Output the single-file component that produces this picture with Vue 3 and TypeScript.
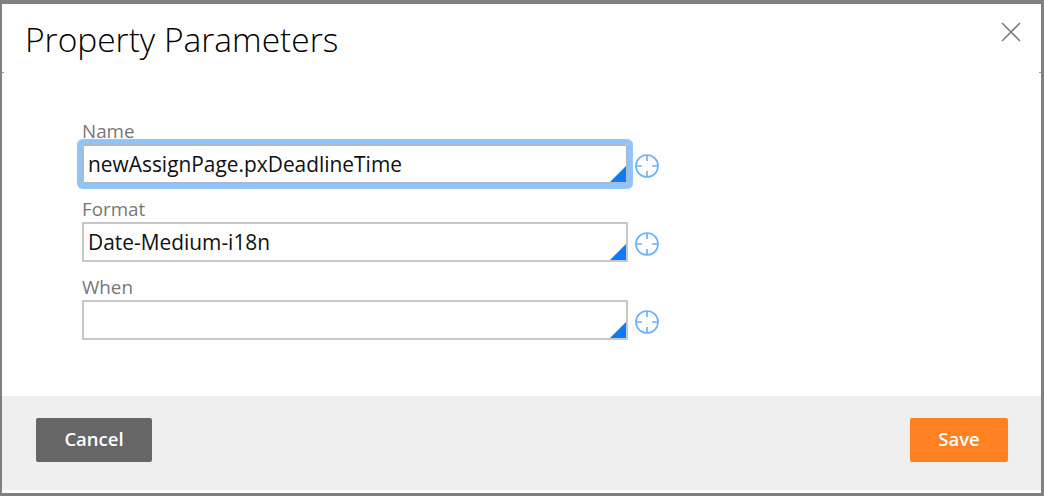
<script setup lang="ts">
interface Field {
  label: string;
  value: string;
  focused?: boolean;
}

const fields: Field[] = [
  { label: 'Name', value: 'newAssignPage.pxDeadlineTime', focused: true },
  { label: 'Format', value: 'Date-Medium-i18n' },
  { label: 'When', value: '' }
];
</script>

<template>
  <div class="page">
    <div class="modal">
      <header class="head">
        <h1>Property Parameters</h1>
        <button class="close" aria-label="Close">
          <svg width="20" height="20" viewBox="0 0 20 20">
            <path d="M1 1L19 19M19 1L1 19" stroke="#808080" stroke-width="1.6" fill="none" />
          </svg>
        </button>
      </header>
      <div class="body">
        <div v-for="field in fields" :key="field.label" class="field">
          <label>{{ field.label }}</label>
          <div class="row">
            <div class="input" :class="{ focused: field.focused }">
              <span>{{ field.value }}</span>
              <i class="corner"></i>
            </div>
            <svg class="target" width="26" height="26" viewBox="0 0 26 26">
              <circle cx="13" cy="13" r="11" stroke="#6fb1f7" stroke-width="1.7" fill="none" />
              <path d="M13 2V8M13 18V24M2 13H8M18 13H24" stroke="#6fb1f7" stroke-width="1.7" fill="none" />
            </svg>
          </div>
        </div>
      </div>
      <footer class="foot">
        <button class="btn cancel">Cancel</button>
        <button class="btn save">Save</button>
      </footer>
    </div>
  </div>
</template>

<style>
html,
body {
  margin: 0;
  background: #808080;
}
</style>

<style scoped>
.page {
  width: 1044px;
  height: 496px;
  box-sizing: border-box;
  padding: 4px 3px 3px 2px;
  font-family: 'Open Sans', 'Liberation Sans', sans-serif;
}
.modal {
  height: 100%;
  display: flex;
  flex-direction: column;
  background: #fff;
  padding-bottom: 3px;
  box-sizing: border-box;
}
.head {
  position: relative;
  height: 68px;
  display: flex;
  justify-content: space-between;
  padding: 0 20px 0 23px;
}
/* tiny ticks left by the window behind the dialog */
.head::before,
.head::after {
  content: '';
  position: absolute;
  bottom: -1px;
  width: 2px;
  height: 1px;
  background: #9a9a9a;
}
.head::before {
  left: 0;
}
.head::after {
  right: 0;
}
h1 {
  margin: 13px 0 0;
  font-size: 33.5px;
  line-height: 44px;
  font-weight: 300;
  color: #000;
}
.close {
  border: 0;
  background: none;
  padding: 0;
  height: 20px;
  margin-top: 18px;
}
.body {
  flex: 1;
  padding: 48px 0 0 80px;
}
.field {
  margin-bottom: 14px;
}
label {
  display: block;
  height: 24px;
  font-size: 18.8px;
  line-height: 22px;
  color: #777;
}
.row {
  display: flex;
  align-items: center;
  gap: 6px;
}
.input {
  position: relative;
  width: 546px;
  height: 40px;
  box-sizing: border-box;
  border: 2px solid #c8c8c8;
  padding-left: 4px;
  font-size: 20.9px;
  line-height: 36px;
  color: #111;
}
.input.focused {
  border-color: #abb9c9;
  box-shadow: 0 0 1px 4.5px #8fc3fb;
  border-radius: 2px;
}
.corner {
  position: absolute;
  right: 0;
  bottom: 0;
  width: 0;
  height: 0;
  border-style: solid;
  border-width: 0 0 16px 16px;
  border-color: transparent transparent #0f7bf3 transparent;
}
.target {
  margin-top: 4px;
}
.foot {
  height: 94px;
  box-sizing: border-box;
  display: flex;
  justify-content: space-between;
  align-items: flex-start;
  padding: 22px 33px 0 34px;
  background: #efefef;
}
.btn {
  height: 44px;
  border: 0;
  border-radius: 2px;
  padding: 0 0 4px;
  font-family: inherit;
  font-size: 18.5px;
  font-weight: 600;
  color: #fff;
}
.cancel {
  width: 116px;
  background: #666;
}
.save {
  width: 98px;
  background: #ff8122;
}
</style>
